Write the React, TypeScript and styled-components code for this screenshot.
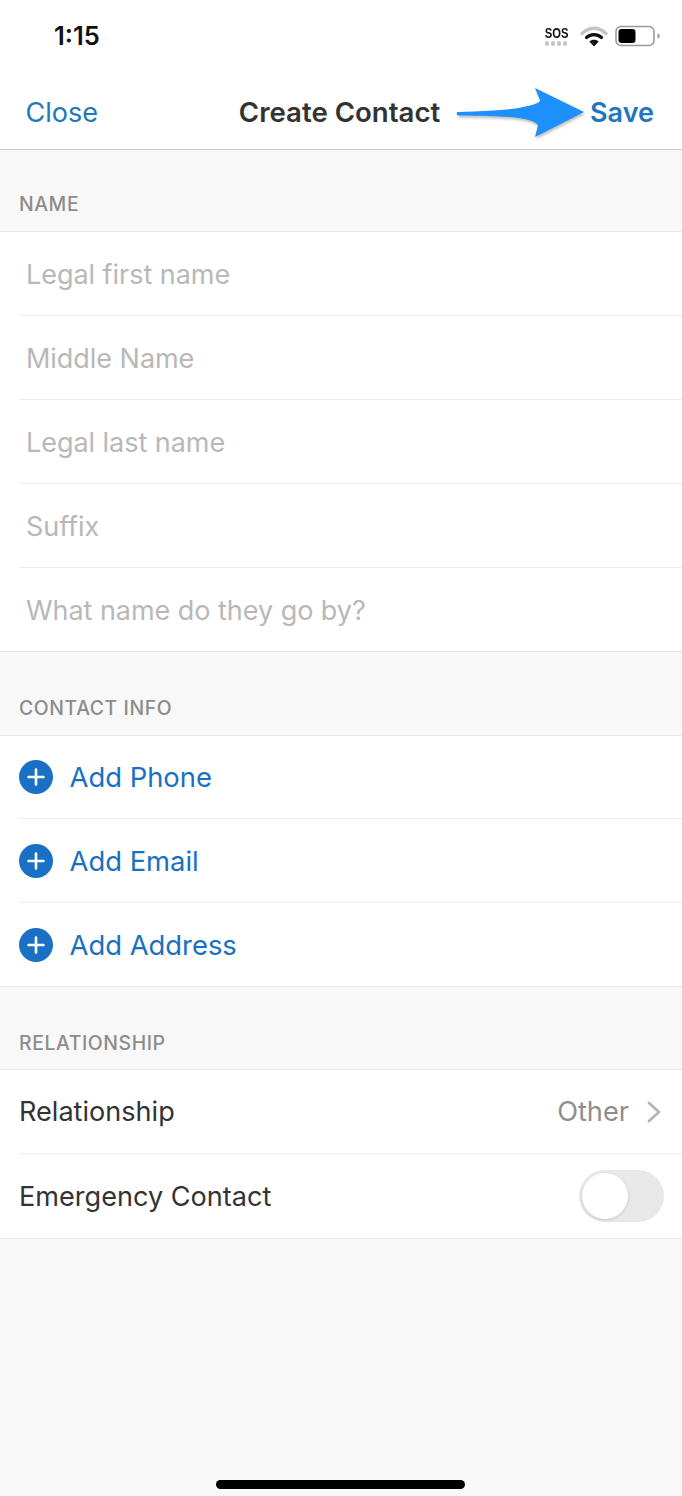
import React from "react";
import styled, { createGlobalStyle } from "styled-components";

const Global = createGlobalStyle`
  html, body { margin: 0; padding: 0; background: #f8f8f8; }
  body { font-family: Inter, "Liberation Sans", sans-serif; }
`;

const Screen = styled.div`
  position: relative;
  width: 682px;
  height: 1496px;
  overflow: hidden;
  background: #f8f8f8;
  display: flex;
  flex-direction: column;
`;

const StatusBar = styled.div`
  height: 72px;
  background: #fff;
  display: flex;
  align-items: center;
  justify-content: space-between;
  padding: 0 21px 0 54px;
  box-sizing: border-box;
`;

const Time = styled.div`
  font-size: 25.5px;
  font-weight: 600;
  color: #111;
  margin-top: -2px;
`;

const StatusIcons = styled.div`
  display: flex;
  align-items: center;
  gap: 7px;
`;

const Sos = styled.div`
  display: flex;
  flex-direction: column;
  align-items: center;
  gap: 2px;
  margin-right: 2px;
`;

const SosText = styled.div`
  font-family: "Liberation Sans", sans-serif;
  font-size: 15px;
  line-height: 13px;
  font-weight: 700;
  color: #111;
  transform: scaleX(0.75);
  width: 30px;
  text-align: center;
`;

const Dots = styled.div`
  display: flex;
  gap: 1.5px;
`;

const Dot = styled.span`
  width: 4.5px;
  height: 4.5px;
  border-radius: 50%;
  background: #c4c4c4;
`;

const NavBar = styled.div`
  height: 78px;
  background: #fff;
  border-bottom: 1.5px solid #c8c8c8;
  box-sizing: border-box;
  display: flex;
  align-items: center;
  justify-content: space-between;
  padding: 3px 28px 0 25.5px;
`;

const NavAction = styled.div<{ $bold?: boolean }>`
  font-size: 27px;
  font-weight: ${(p) => (p.$bold ? 600 : 400)};
  color: #2276bd;
`;

const NavTitle = styled.div`
  font-size: 27.6px;
  font-weight: 600;
  color: #333;
  position: absolute;
  left: 0;
  right: 3px;
  text-align: center;
`;

const SectionHeader = styled.div<{ $height: number; $pad: number }>`
  height: ${(p) => p.$height}px;
  box-sizing: border-box;
  padding: 0 19px ${(p) => p.$pad}px;
  display: flex;
  align-items: flex-end;
  font-size: 19.4px;
  font-weight: 550;
  letter-spacing: 0.6px;
  color: #8c8c8c;
`;

const Group = styled.div`
  background: #fff;
  border-top: 1px solid #e6e6e6;
  border-bottom: 1px solid #e6e6e6;
`;

const Row = styled.div<{ $height: number; $first?: boolean; $nudge?: number }>`
  height: ${(p) => p.$height}px;
  margin-left: 19px;
  padding-top: ${(p) => p.$nudge ?? 0}px;
  box-sizing: border-box;
  border-top: ${(p) => (p.$first ? "none" : "1px solid #ececec")};
  display: flex;
  align-items: center;
`;

const Placeholder = styled.div`
  font-size: 27px;
  letter-spacing: -0.04px;
  color: #b8b8b8;
  padding: 1px 0 0 7px;
`;

const AddIcon = styled.svg`
  width: 34px;
  height: 34px;
  flex: none;
`;

const AddLabel = styled.div`
  font-size: 27.4px;
  font-weight: 430;
  color: #1a70bf;
  margin-left: 16.5px;
`;

const Label = styled.div`
  font-size: 27.1px;
  color: #333;
  flex: 1;
`;

const Value = styled.div`
  font-size: 27.2px;
  color: #8e8e8e;
`;

const Chevron = styled.svg`
  width: 16px;
  height: 24px;
  margin: 0 20px 0 17px;
`;

const Toggle = styled.div`
  position: relative;
  width: 85px;
  height: 52px;
  margin-right: 18px;
  border-radius: 26px;
  background: #e8e8e9;
`;

const Knob = styled.div`
  position: absolute;
  top: 3px;
  left: 3px;
  width: 46px;
  height: 46px;
  border-radius: 50%;
  background: #fff;
  box-shadow: 0 1px 3px rgba(0, 0, 0, 0.16);
`;

const Arrow = styled.svg`
  position: absolute;
  left: 456px;
  top: 87px;
  width: 130px;
  height: 54px;
  filter: drop-shadow(1px 2px 1.5px rgba(0, 0, 0, 0.28));
`;

const HomeIndicator = styled.div`
  position: absolute;
  left: 216px;
  top: 1480px;
  width: 249px;
  height: 9px;
  border-radius: 5px;
  background: #000;
`;

const names = ["Legal first name", "Middle Name", "Legal last name", "Suffix", "What name do they go by?"];
const adds = ["Add Phone", "Add Email", "Add Address"];

export default function App() {
  return (
    <Screen>
      <Global />
      <StatusBar>
        <Time>1:15</Time>
        <StatusIcons>
          <Sos>
            <SosText>SOS</SosText>
            <Dots>
              <Dot />
              <Dot />
              <Dot />
              <Dot />
            </Dots>
          </Sos>
          <svg width="28" height="21" viewBox="0 0 28 21">
            <path d="M2 7.5C9.5 .5 18.5 .5 26 7.5" fill="none" stroke="#c4c4c4" strokeWidth="3.4" strokeLinecap="round" />
            <path d="M6.5 11.5C11 7.6 17 7.6 21.5 11.5" fill="none" stroke="#111" strokeWidth="3.2" strokeLinecap="round" />
            <path d="M14 20.5L9.3 15.5C12 13 16 13 18.7 15.5Z" fill="#111" />
          </svg>
          <svg width="46" height="22" viewBox="0 0 46 22">
            <rect x="1" y="1.5" width="38" height="19" rx="5" fill="#fff" stroke="#9a9a9a" strokeWidth="1.6" />
            <rect x="3.5" y="4" width="17" height="14" rx="3" fill="#000" />
            <path d="M42.5 8.5C44 9 44.8 10 44.8 11S44 13 42.5 13.5Z" fill="#9a9a9a" />
          </svg>
        </StatusIcons>
      </StatusBar>
      <NavBar>
        <NavAction>Close</NavAction>
        <NavTitle>Create Contact</NavTitle>
        <NavAction $bold>Save</NavAction>
      </NavBar>
      <SectionHeader $height={81} $pad={15}>NAME</SectionHeader>
      <Group>
        {names.map((n, i) => (
          <Row key={n} $first={i === 0} $height={i === 0 ? 83 : 84}>
            <Placeholder>{n}</Placeholder>
          </Row>
        ))}
      </Group>
      <SectionHeader $height={83} $pad={15}>CONTACT INFO</SectionHeader>
      <Group>
        {adds.map((n, i) => (
          <Row key={n} $first={i === 0} $height={i === 0 ? 82 : 84} $nudge={i === 0 ? 0 : 1}>
            <AddIcon viewBox="0 0 34 34">
              <circle cx="17" cy="17" r="17" fill="#1a70c4" />
              <path d="M17 9.5V24.5M9.5 17H24.5" stroke="#fff" strokeWidth="2.6" strokeLinecap="round" />
            </AddIcon>
            <AddLabel>{n}</AddLabel>
          </Row>
        ))}
      </Group>
      <SectionHeader $height={82} $pad={14}>RELATIONSHIP</SectionHeader>
      <Group>
        <Row $first $height={83}>
          <Label>Relationship</Label>
          <Value>Other</Value>
          <Chevron viewBox="0 0 16 24">
            <path d="M3 3L13 12L3 21" fill="none" stroke="#b5b5b5" strokeWidth="2.8" strokeLinecap="round" strokeLinejoin="round" />
          </Chevron>
        </Row>
        <Row $height={85}>
          <Label>Emergency Contact</Label>
          <Toggle>
            <Knob />
          </Toggle>
        </Row>
      </Group>
      <Arrow viewBox="0 0 130 54">
        <path
          d="M2 25C30 24 55 23 67 20C78 18 85 15 84 13L79 1L128 25L79 50L82 38C78 33 65 31 55 30C35 29 15 28.5 3 28.5C0 28 0 25.5 2 25Z"
          fill="#1e90fb"
        />
      </Arrow>
      <HomeIndicator />
    </Screen>
  );
}
